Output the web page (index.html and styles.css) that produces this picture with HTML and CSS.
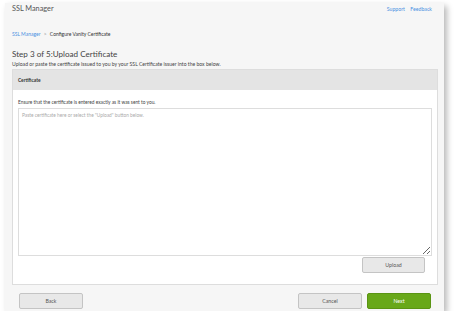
FILE: index.html
```html
<!DOCTYPE html>
<html lang="en">
<head>
    <meta charset="UTF-8">
    <meta name="viewport" content="width=device-width, initial-scale=1.0">
    <title>SSL Manager</title>
    <link rel="stylesheet" href="styles.css">
</head>
<body>
    <div class="window">
        <div class="topbar">
            <div class="app-title">SSL Manager</div>
            <div class="top-links">
                <a href="#">Support</a>
                <a href="#">Feedback</a>
            </div>
        </div>

        <div class="breadcrumb">
            <a href="#">SSL Manager</a>
            <span class="sep">&gt;</span>
            <span>Configure Vanity Certificate</span>
        </div>

        <h1>Step 3 of 5:Upload Certificate</h1>
        <p class="intro">Upload or paste the certificate issued to you by your SSL Certificate issuer into the box below.</p>

        <div class="panel">
            <div class="panel-head">Certificate</div>
            <div class="panel-body">
                <p class="hint">Ensure that the certificate is entered exactly as it was sent to you.</p>
                <textarea class="cert" placeholder="Paste certificate here or select the &quot;Upload&quot; button below."></textarea>
                <div class="upload-row">
                    <button class="btn">Upload</button>
                </div>
            </div>
        </div>

        <div class="footer">
            <button class="btn">Back</button>
            <div class="footer-right">
                <button class="btn">Cancel</button>
                <button class="btn btn-next">Next</button>
            </div>
        </div>
    </div>
</body>
</html>
```

FILE: styles.css
```css
body {
    margin: 0; background: #fff;
    font-family: Lato, "Open Sans", sans-serif;
    color: #444;
}
.window {
    margin: 3px 0 0 5px; width: 439px; height: 308px;
    box-sizing: border-box; padding: 0 6px 0 7px;
    background: #f6f6f6;
    box-shadow: 3px 3px 6px rgba(0,0,0,0.28);
    display: flex; flex-direction: column;
}
a { color: #4a90e2; text-decoration: none; }
.topbar { display: flex; justify-content: space-between; height: 12px; line-height: 12px; }
.app-title { font-size: 7.3px; color: #555; }
.top-links { font-size: 5.2px; padding-right: 6px; }
.top-links a { margin-left: 4px; }
.breadcrumb { margin-top: 15px; font-size: 5px; line-height: 8px; color: #333; }
.breadcrumb .sep { color: #999; margin: 0 2px; }
h1 { margin: 10px 0 0; font-size: 8.1px; line-height: 12px; font-weight: 400; color: #444; }
.intro { margin: 0; font-size: 5.1px; line-height: 9px; color: #444; }
.panel {
    background: #fff;
    border: 1px solid #ddd; height: 216px; box-sizing: border-box;
    display: flex; flex-direction: column;
}
.panel-head {
    background: #e4e4e4; height: 20px; line-height: 20px;
    padding-left: 5px; font-size: 4.8px; font-weight: 700; color: #333;
}
.panel-body { padding: 0 5px 0 5px; display: flex; flex-direction: column; }
.hint { margin: 0; font-size: 4.8px; line-height: 9px; padding-top: 8px; padding-bottom: 1px; }
.cert {
    width: 414px; height: 148px; box-sizing: border-box; margin: 0;
    border: 1px solid #ddd; padding: 3px;
    font-family: Lato, sans-serif; font-size: 4.8px; color: #444;
}
.cert::placeholder { color: #aaa; }
.upload-row { display: flex; justify-content: flex-end; padding-right: 7px; margin-top: 1px; }
.btn {
    width: 63px; height: 16px; padding: 0;
    background: #e8e8e8; border: 1px solid #c4c4c4; border-radius: 2px;
    font-family: Lato, sans-serif; font-size: 5.2px; color: #555;
}
.footer { display: flex; justify-content: space-between; margin-top: 8px; padding: 0 7px 0 7px; }
.footer .btn { width: 64px; }
.footer-right { display: flex; gap: 5px; }
.btn-next { background: #68a819; border-color: #5a9413; color: #fff; }
```
